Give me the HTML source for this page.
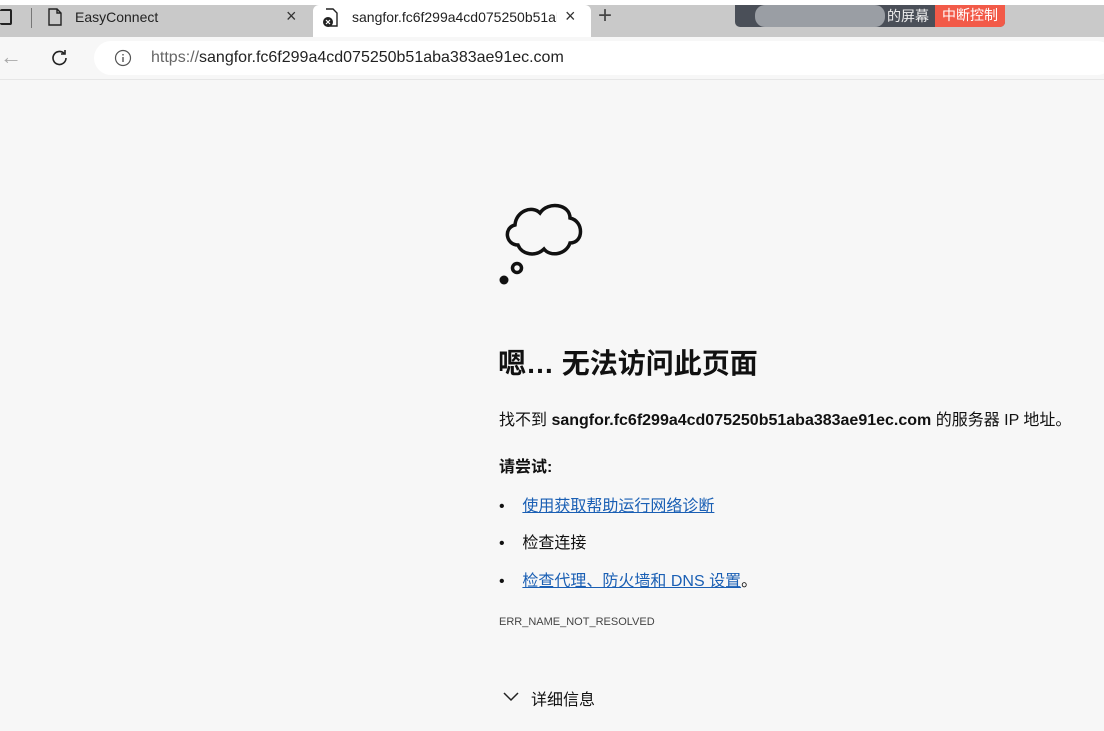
<!DOCTYPE html>
<html><head><meta charset="utf-8"><style>
*{margin:0;padding:0;box-sizing:border-box}
body{width:1104px;height:731px;overflow:hidden;background:#f7f7f7;font-family:"Liberation Sans","Noto Sans CJK SC",sans-serif;position:relative;color:#111}
.abs{position:absolute}
a{color:#1a5fb4;text-decoration:underline}
</style></head><body>
<div class="abs" style="left:0;top:0;width:1104px;height:5px;background:#fff"></div>
<div class="abs" style="left:0;top:5px;width:1104px;height:32px;background:#c9c9c9"></div>
<div class="abs" style="left:0;top:9px;width:12px;height:16px;border:2px solid #222;border-radius:2px;border-left:none"></div>
<div class="abs" style="left:31px;top:8px;width:1px;height:20px;background:#777"></div>
<svg class="abs" style="left:48px;top:8px" width="14" height="18"><path d="M1 1h8l4 4v12H1z M9 1v4h4" fill="none" stroke="#222" stroke-width="1.4"/></svg>
<div class="abs" style="left:75px;top:9px;font-size:14px;color:#222">EasyConnect</div>
<div class="abs" style="left:286px;top:6px;font-size:18px;color:#333">×</div>
<div class="abs" style="left:313px;top:5px;width:278px;height:34px;background:#fff;border-radius:6px 6px 0 0"></div>
<svg class="abs" style="left:322px;top:8px" width="18" height="20"><path d="M4 1h7l4 4v13H6" fill="none" stroke="#222" stroke-width="1.4"/><circle cx="6" cy="14" r="5" fill="#222"/><path d="M4 12l4 4M8 12l-4 4" stroke="#fff" stroke-width="1.2"/></svg>
<div class="abs" style="left:352px;top:9px;font-size:14px;color:#222;width:205px;overflow:hidden;white-space:nowrap">sangfor.fc6f299a4cd075250b51aba</div>
<div class="abs" style="left:565px;top:6px;font-size:18px;color:#333">×</div>
<div class="abs" style="left:598px;top:2px;font-size:24px;color:#444;font-weight:300">+</div>
<div class="abs" style="left:735px;top:5px;width:270px;height:22px;background:#4a4f58;border-radius:0 0 5px 5px;overflow:hidden">
<div class="abs" style="left:20px;top:0;width:130px;height:22px;background:#9a9ea4;border-radius:10px"></div>
<div class="abs" style="left:152px;top:1px;font-size:14px;color:#eee">的屏幕</div>
<div class="abs" style="left:200px;top:0;width:70px;height:22px;background:#f25a48;color:#fff;font-size:14px;text-align:center;line-height:20px">中断控制</div>
</div>
<div class="abs" style="left:0;top:37px;width:1104px;height:43px;background:#f7f7f7;border-bottom:1px solid #e6e6e6"></div>
<div class="abs" style="left:0;top:44px;font-size:22px;color:#aaa">←</div>
<svg class="abs" style="left:50px;top:48px" width="20" height="20"><path d="M16 10a6.5 6.5 0 1 1-2-4.7" fill="none" stroke="#222" stroke-width="1.6"/><path d="M15 2v4h-4" fill="none" stroke="#222" stroke-width="1.6"/></svg>
<div class="abs" style="left:94px;top:41px;width:1020px;height:34px;background:#fff;border-radius:17px"></div>
<svg class="abs" style="left:114px;top:49px" width="18" height="18"><circle cx="9" cy="9" r="7.5" fill="none" stroke="#555" stroke-width="1.2"/><path d="M9 8v5M9 5v1.5" stroke="#555" stroke-width="1.4"/></svg>
<div class="abs" style="left:151px;top:49px;font-size:16px;color:#666">https://<span style="color:#222">sangfor.fc6f299a4cd075250b51aba383ae91ec.com</span></div>
<svg class="abs" style="left:496px;top:195px" width="95" height="95"><path d="M22 50C10 50 7 33 19 30C20 16 36 10 44 18C52 6 74 9 74 23C88 26 88 48 74 48C70 60 54 62 48 54C40 62 26 60 22 50Z" fill="none" stroke="#111" stroke-width="3.5"/><circle cx="21" cy="73" r="4.5" fill="none" stroke="#111" stroke-width="3.5"/><circle cx="8" cy="85" r="4.5" fill="#111"/></svg>
<div class="abs" style="left:498px;top:342px;font-size:28px;font-weight:bold">嗯… 无法访问此页面</div>
<div class="abs" style="left:499px;top:406px;font-size:16px">找不到 <b>sangfor.fc6f299a4cd075250b51aba383ae91ec.com</b> 的服务器 IP 地址。</div>
<div class="abs" style="left:499px;top:453px;font-size:16px;font-weight:bold">请尝试:</div>
<div class="abs" style="left:499px;top:492px;font-size:16px">•&nbsp;&nbsp;&nbsp;&nbsp;<a>使用获取帮助运行网络诊断</a></div>
<div class="abs" style="left:499px;top:529px;font-size:16px">•&nbsp;&nbsp;&nbsp;&nbsp;检查连接</div>
<div class="abs" style="left:499px;top:567px;font-size:16px">•&nbsp;&nbsp;&nbsp;&nbsp;<a>检查代理、防火墙和 DNS 设置</a>。</div>
<div class="abs" style="left:499px;top:616px;font-size:11px;color:#444">ERR_NAME_NOT_RESOLVED</div>
<svg class="abs" style="left:503px;top:691px" width="16" height="12"><path d="M1 2l7 7 7-7" fill="none" stroke="#222" stroke-width="1.5"/></svg>
<div class="abs" style="left:531px;top:686px;font-size:16px">详细信息</div>
</body></html>
